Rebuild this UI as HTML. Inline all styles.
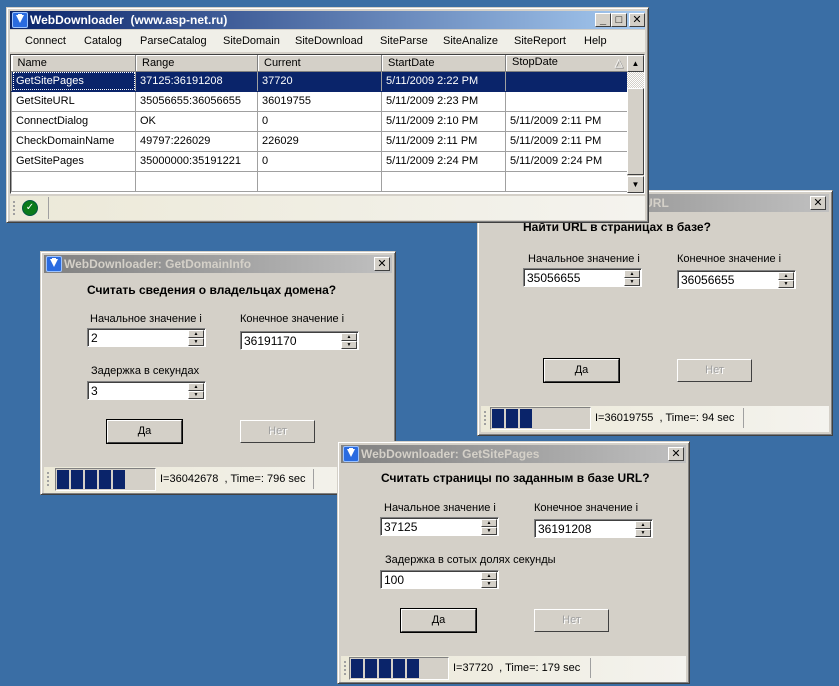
<!DOCTYPE html>
<html><head><meta charset="utf-8"><style>
*{box-sizing:border-box;margin:0;padding:0}
body{width:839px;height:686px;background:#3a6ea5;position:relative;overflow:hidden;font-family:"Liberation Sans","DejaVu Sans",sans-serif;font-size:11px;color:#000}
.a{position:absolute}
.win{position:absolute;background:#d4d0c8;border:1px solid;border-color:#d4d0c8 #404040 #404040 #d4d0c8;box-shadow:inset 1px 1px 0 #fff,inset -1px -1px 0 #808080}
.tb{position:absolute;height:18px;color:#d4d0c8;font-weight:bold;font-size:12px;line-height:18px;padding-left:20px;background:linear-gradient(90deg,#808080,#c0c0c0);white-space:nowrap;overflow:hidden}
.tb.act{background:linear-gradient(90deg,#0a246a,#a6caf0);color:#fff}
.ico{position:absolute;left:2px;top:1px;width:16px;height:16px;background:#2a6be0;border:1px solid #9cc3ff;border-radius:2px}
.ico:after{content:"";position:absolute;left:3px;top:2px;width:0;height:0;border-left:4px solid transparent;border-right:4px solid transparent;border-top:8px solid #fff}
.ico:before{content:"";position:absolute;left:5px;top:1px;width:4px;height:5px;background:#fff}
.cb{position:absolute;width:16px;height:14px;background:#d4d0c8;border:1px solid;border-color:#fff #404040 #404040 #fff;font-size:11px;font-weight:bold;text-align:center;line-height:12px;color:#000}
.q{position:absolute;font-weight:bold;font-size:12px;white-space:nowrap}
.lb{position:absolute;white-space:nowrap;font-size:11px}
.sp{position:absolute;height:19px;background:#fff;border:1px solid;border-color:#808080 #fff #fff #808080;box-shadow:inset 1px 1px 0 #404040;padding-left:3px;padding-top:1px;line-height:16px;font-size:12px}
.sp i{position:absolute;right:1px;width:16px;height:8px;background:#d4d0c8;border:1px solid;border-color:#fff #404040 #404040 #fff;font-style:normal;font-size:5px;line-height:6px;text-align:center}
.sp i.u{top:1px}.sp i.d{top:9px}
.sp i.u:after{content:"▲"}.sp i.d:after{content:"▼"}
.bt{position:absolute;width:75px;height:23px;background:#d4d0c8;border:1px solid;border-color:#fff #404040 #404040 #fff;text-align:center;line-height:21px;font-size:11px}
.bt.def{outline:1px solid #000}
.bt.dis{color:#a0a0a0;text-shadow:1px 1px 0 #fff}
.sb{position:absolute;background:linear-gradient(90deg,#ece9d8,#f4f3ee)}
.grip{position:absolute;left:3px;top:5px;width:2px;height:14px;background:repeating-linear-gradient(180deg,#a0a0a0 0 2px,transparent 2px 4px)}
.pp{position:absolute;border:1px solid;border-color:#808080 #fff #fff #808080;background:#d4d0c8}
.pp b{position:absolute;top:1px;width:12px;bottom:1px;background:#0a246a}
.tp{position:absolute;border-right:1px solid #a0a0a0;line-height:20px;padding-left:4px;white-space:nowrap}
table{border-collapse:collapse;position:absolute;background:#fff;table-layout:fixed}
td{border:1px solid #a0a0a0;height:20px;padding-left:4px;white-space:nowrap;overflow:hidden;font-size:11px}
th{height:16px;background:#d4d0c8;font-weight:normal;text-align:left;padding-left:6px;border-right:1px solid #808080;border-bottom:1px solid #808080;box-shadow:inset 1px 1px 0 #fff;font-size:11px}
tr.sel td{background:#0a246a;color:#fff;border-color:#0a246a #a0a0a0}
</style></head><body>

<div class="win" style="left:477px;top:190px;width:356px;height:246px">
  <div class="tb" style="left:3px;top:3px;width:348px">WebDownloader: GetSiteURL<div class="ico"></div></div>
  <div class="cb" style="left:332px;top:5px">✕</div>
</div>
<div class="q" style="left:523px;top:220px">Найти URL в страницах в базе?</div>
<div class="lb" style="left:528px;top:253px">Начальное значение i</div>
<div class="sp" style="left:523px;top:268px;width:119px">35056655<i class="u"></i><i class="d"></i></div>
<div class="lb" style="left:677px;top:253px">Конечное значение i</div>
<div class="sp" style="left:677px;top:270px;width:119px">36056655<i class="u"></i><i class="d"></i></div>
<div class="bt def" style="left:544px;top:359px">Да</div>
<div class="bt dis" style="left:677px;top:359px">Нет</div>
<div class="sb" style="left:481px;top:406px;width:348px;height:26px">
  <div class="grip"></div>
  <div class="pp" style="left:9px;top:1px;width:101px;height:23px"><b style="left:1px"></b><b style="left:15px"></b><b style="left:29px"></b></div>
  <div class="tp" style="left:110px;top:2px;width:153px">I=36019755 &nbsp;, Time=: 94 sec</div>
</div>

<div class="win" style="left:6px;top:7px;width:643px;height:216px">
  <div class="tb act" style="left:3px;top:3px;width:635px;font-size:12px">WebDownloader&nbsp; (www.asp-net.ru)<div class="ico"></div></div>
  <div class="cb" style="left:588px;top:5px">_</div>
  <div class="cb" style="left:604px;top:5px">□</div>
  <div class="cb" style="left:622px;top:5px">✕</div>
  <div class="a" style="left:3px;top:22px;width:635px;height:22px;background:#f0efe8"></div>
  <div class="a" style="left:3px;top:188px;width:635px;height:24px;background:linear-gradient(90deg,#ece9d8,#f4f3ee)">
    <div class="grip"></div>
    <div class="a" style="left:12px;top:4px;width:16px;height:16px;border-radius:50%;background:#0a7a1a;border:1px solid #054;color:#fff;font-size:10px;text-align:center;line-height:14px;font-weight:bold">✓</div>
    <div class="a" style="left:38px;top:1px;width:1px;height:22px;background:#a0a0a0"></div>
  </div>
</div>
<div class="a" style="left:25px;top:35px">Connect</div>
<div class="a" style="left:84px;top:35px">Catalog</div>
<div class="a" style="left:140px;top:35px">ParseCatalog</div>
<div class="a" style="left:223px;top:35px">SiteDomain</div>
<div class="a" style="left:295px;top:35px">SiteDownload</div>
<div class="a" style="left:380px;top:35px">SiteParse</div>
<div class="a" style="left:443px;top:35px">SiteAnalize</div>
<div class="a" style="left:514px;top:35px">SiteReport</div>
<div class="a" style="left:584px;top:35px">Help</div>
<div class="a" style="left:10px;top:54px;width:635px;height:140px;border:1px solid;border-color:#404040 #fff #fff #404040;background:#fff"></div>
<table style="left:11px;top:55px;width:616px">
<colgroup><col style="width:124px"><col style="width:122px"><col style="width:124px"><col style="width:124px"><col style="width:122px"></colgroup>
<tr><th>Name</th><th>Range</th><th>Current</th><th>StartDate</th><th>StopDate <span style="float:right;color:#fff;text-shadow:1px 1px 0 #808080;padding-right:4px">△</span></th></tr>
<tr class="sel"><td style="outline:1px dotted #fff;outline-offset:-2px">GetSitePages</td><td>37125:36191208</td><td>37720</td><td>5/11/2009 2:22 PM</td><td></td></tr>
<tr><td>GetSiteURL</td><td>35056655:36056655</td><td>36019755</td><td>5/11/2009 2:23 PM</td><td></td></tr>
<tr><td>ConnectDialog</td><td>OK</td><td>0</td><td>5/11/2009 2:10 PM</td><td>5/11/2009 2:11 PM</td></tr>
<tr><td>CheckDomainName</td><td>49797:226029</td><td>226029</td><td>5/11/2009 2:11 PM</td><td>5/11/2009 2:11 PM</td></tr>
<tr><td>GetSitePages</td><td>35000000:35191221</td><td>0</td><td>5/11/2009 2:24 PM</td><td>5/11/2009 2:24 PM</td></tr>
<tr><td></td><td></td><td></td><td></td><td></td></tr>
</table>
<div class="a" style="left:627px;top:55px;width:17px;height:138px;background:#d4d0c8">
  <div class="cb" style="left:0;top:0;width:17px;height:17px;font-size:8px;line-height:15px">▲</div>
  <div class="a" style="left:0;top:17px;width:17px;height:16px;background:repeating-conic-gradient(#fff 0 25%,#d4d0c8 0 50%) 0 0/2px 2px"></div>
  <div class="cb" style="left:0;top:33px;width:17px;height:87px"></div>
  <div class="cb" style="left:0;top:121px;width:17px;height:17px;font-size:8px;line-height:15px">▼</div>
</div>

<div class="win" style="left:40px;top:251px;width:356px;height:244px">
  <div class="tb" style="left:3px;top:3px;width:348px">WebDownloader: GetDomainInfo<div class="ico"></div></div>
  <div class="cb" style="left:333px;top:5px">✕</div>
  <div class="sb" style="left:3px;top:215px;width:348px;height:26px">
    <div class="grip"></div>
    <div class="pp" style="left:11px;top:1px;width:101px;height:23px"><b style="left:1px"></b><b style="left:15px"></b><b style="left:29px"></b><b style="left:43px"></b><b style="left:57px"></b></div>
    <div class="tp" style="left:112px;top:2px;width:158px">I=36042678 &nbsp;, Time=: 796 sec</div>
  </div>
</div>
<div class="q" style="left:87px;top:283px">Считать сведения о владельцах домена?</div>
<div class="lb" style="left:90px;top:313px">Начальное значение i</div>
<div class="sp" style="left:87px;top:328px;width:119px">2<i class="u"></i><i class="d"></i></div>
<div class="lb" style="left:240px;top:313px">Конечное значение i</div>
<div class="sp" style="left:240px;top:331px;width:119px">36191170<i class="u"></i><i class="d"></i></div>
<div class="lb" style="left:91px;top:365px">Задержка в секундах</div>
<div class="sp" style="left:87px;top:381px;width:119px">3<i class="u"></i><i class="d"></i></div>
<div class="bt def" style="left:107px;top:420px">Да</div>
<div class="bt dis" style="left:240px;top:420px">Нет</div>

<div class="win" style="left:337px;top:441px;width:353px;height:243px">
  <div class="tb" style="left:3px;top:3px;width:345px">WebDownloader: GetSitePages<div class="ico"></div></div>
  <div class="cb" style="left:330px;top:5px">✕</div>
  <div class="sb" style="left:3px;top:214px;width:345px;height:26px">
    <div class="grip"></div>
    <div class="pp" style="left:8px;top:1px;width:100px;height:23px"><b style="left:1px"></b><b style="left:15px"></b><b style="left:29px"></b><b style="left:43px"></b><b style="left:57px"></b></div>
    <div class="tp" style="left:108px;top:2px;width:142px">I=37720 &nbsp;, Time=: 179 sec</div>
  </div>
</div>
<div class="q" style="left:381px;top:471px">Считать страницы по заданным в базе URL?</div>
<div class="lb" style="left:384px;top:502px">Начальное значение i</div>
<div class="sp" style="left:380px;top:517px;width:119px">37125<i class="u"></i><i class="d"></i></div>
<div class="lb" style="left:534px;top:502px">Конечное значение i</div>
<div class="sp" style="left:534px;top:519px;width:119px">36191208<i class="u"></i><i class="d"></i></div>
<div class="lb" style="left:385px;top:554px">Задержка в сотых долях секунды</div>
<div class="sp" style="left:380px;top:570px;width:119px">100<i class="u"></i><i class="d"></i></div>
<div class="bt def" style="left:401px;top:609px">Да</div>
<div class="bt dis" style="left:534px;top:609px">Нет</div>
</body></html>
